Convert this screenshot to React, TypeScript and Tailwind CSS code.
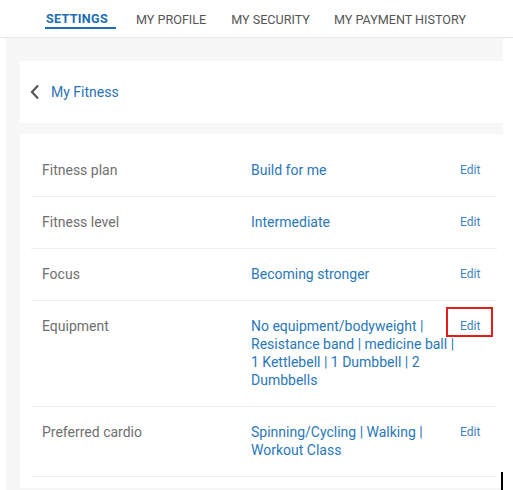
import React from "react";

const rows: { label: string; value: string; boxed?: boolean }[] = [
  { label: "Fitness plan", value: "Build for me" },
  { label: "Fitness level", value: "Intermediate" },
  { label: "Focus", value: "Becoming stronger" },
  {
    label: "Equipment",
    value:
      "No equipment/bodyweight | Resistance band | medicine ball | 1 Kettlebell | 1 Dumbbell | 2 Dumbbells",
    boxed: true,
  },
  { label: "Preferred cardio", value: "Spinning/Cycling | Walking | Workout Class" },
];

export default function App() {
  return (
    <div className="relative w-[513px] h-[490px] overflow-hidden bg-white font-['Roboto',sans-serif]">
      <nav className="h-[38px] border-b border-[#e8e8e8] flex items-start pt-[11px] text-[12.6px] uppercase">
        <div className="ml-[45px] flex flex-col items-start">
          <span className="px-[1px] font-bold text-[#1d6db3] leading-[15px] tracking-[0.3px]">Settings</span>
          <span className="mt-[1px] h-[2px] w-[71px] bg-[#1d6db3]" />
        </div>
        <span className="ml-[20px] text-[#555] leading-[17px]">My Profile</span>
        <span className="ml-[25px] text-[#555] leading-[17px]">My Security</span>
        <span className="ml-[24px] text-[#555] leading-[17px]">My Payment History</span>
      </nav>
      <div className="ml-[6px] w-[497px] h-[452px] bg-[#f7f7f7] pt-[23px] pl-[14px]">
        <div className="h-[62px] bg-white flex items-center pl-[10px]">
          <svg width="10" height="16" viewBox="0 0 10 16" className="mr-[11px]">
            <path d="M8 1.5 L2 8 L8 14.5" fill="none" stroke="#555" strokeWidth="2.2" />
          </svg>
          <span className="text-[14px] text-[#2a73b5]">My Fitness</span>
        </div>
        <div className="mt-[11px] bg-white pt-[11px] pb-[11px] pl-[11px] pr-[6px]">
          {rows.map((r) => (
            <div
              key={r.label}
              className="grid grid-cols-[209px_209px_1fr] pl-[11px] pt-[16px] pb-[17px] border-b border-[#ececec] text-[14px] leading-[18px]"
            >
              <span className="text-[#6f6f6f]">{r.label}</span>
              <span className="text-[#2a78b8] pr-[4px]">{r.value}</span>
              <span className="relative text-[12px] text-[#3b82c0]">
                Edit
                {r.boxed && (
                  <span className="absolute left-[-14px] top-[-10px] w-[47px] h-[30px] border-2 border-[#e41e1e]" />
                )}
              </span>
            </div>
          ))}
        </div>
      </div>
      <span className="absolute left-[501px] top-[472px] w-[2px] h-[18px] bg-black" />
    </div>
  );
}
